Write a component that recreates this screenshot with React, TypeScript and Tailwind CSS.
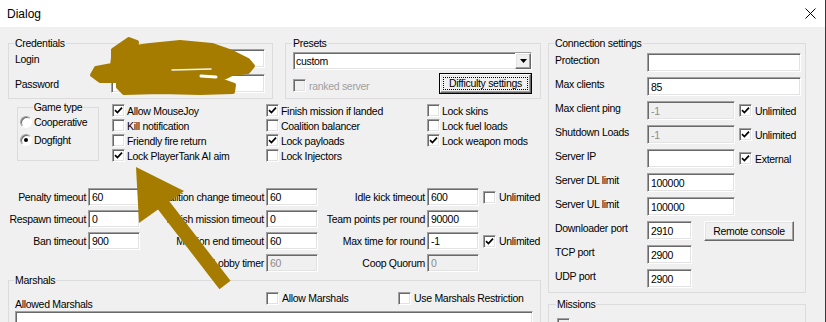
import React from 'react';

// classic win32 3d edges
const sunken = 'border border-t-[#a0a0a0] border-l-[#a0a0a0] border-b-white border-r-white shadow-[inset_1px_1px_0_#696969,inset_-1px_-1px_0_#e3e3e3]';
const raised = 'border border-t-white border-l-white border-b-[#696969] border-r-[#696969] shadow-[inset_-1px_-1px_0_#a0a0a0,inset_1px_1px_0_#e3e3e3]';

interface EditProps {
    w: string;
    h?: string;
    value?: string;
    disabled?: boolean;
}

const Edit: React.FC<EditProps> = ({ w, h = 'h-[19px]', value = '', disabled }) => (
    <div className={`${w} ${h} ${sunken} ${disabled ? 'bg-[#f0f0f0] text-[#8c8c8c]' : 'bg-white'} shrink-0 flex items-center pl-[3px]`}>
        {value}
    </div>
);

const Check: React.FC<{ checked?: boolean; disabled?: boolean }> = ({ checked, disabled }) => (
    <div className={`w-[13px] h-[13px] shrink-0 ${sunken} ${disabled ? 'bg-[#f0f0f0]' : 'bg-white'} flex items-center justify-center`}>
        {checked && (
            <svg width="9" height="9" viewBox="0 0 9 9">
                <path d="M1 4.2 L3.4 6.6 L8 1.6" fill="none" stroke="#000" strokeWidth="1.7" />
            </svg>
        )}
    </div>
);

const CheckRow: React.FC<{ label: string; checked?: boolean; disabled?: boolean; className?: string }> = ({ label, checked, disabled, className = '' }) => (
    <div className={`flex items-center gap-[2px] whitespace-nowrap ${className}`}>
        <Check checked={checked} disabled={disabled} />
        <span className={disabled ? 'text-[#a0a0a0]' : ''}>{label}</span>
    </div>
);

const Radio: React.FC<{ label: string; on?: boolean }> = ({ label, on }) => (
    <div className="h-[16px] flex items-center gap-[2px]">
        <div className="w-[12px] h-[12px] rounded-full bg-white border border-t-[#a0a0a0] border-l-[#a0a0a0] border-b-white border-r-white shadow-[inset_1px_1px_0_#696969] flex items-center justify-center">
            {on && <div className="w-[4px] h-[4px] rounded-full bg-black" />}
        </div>
        <span>{label}</span>
    </div>
);

const Group: React.FC<{ title: string; className?: string; center?: boolean; children?: React.ReactNode }> = ({ title, className = '', center, children }) => (
    <fieldset className={`border border-[#dcdcdc] ${className}`}>
        <legend className={`leading-[12px] px-[1px] ${center ? 'mx-auto' : '-ml-[1px]'}`}>{title}</legend>
        {children}
    </fieldset>
);

const TimeoutRow: React.FC<{ label: string; value: string; lw: string; disabled?: boolean; check?: boolean }> = ({ label, value, lw, disabled, check }) => (
    <div className="h-[18px] flex items-center">
        <div className={`${lw} text-right whitespace-nowrap pr-[2px]`}>{label}</div>
        <Edit w="w-[52px]" h="h-[18px]" value={value} disabled={disabled} />
        {check !== undefined && <CheckRow label="Unlimited" checked={check} className="ml-[4px] gap-[3px]" />}
    </div>
);

const connRows = [
    { label: 'Protection', w: 'w-[154px]', value: '' },
    { label: 'Max clients', w: 'w-[154px]', value: '85' },
    { label: 'Max client ping', w: 'w-[88px]', value: '-1', disabled: true, check: 'Unlimited' },
    { label: 'Shutdown Loads', w: 'w-[88px]', value: '-1', disabled: true, check: 'Unlimited' },
    { label: 'Server IP', w: 'w-[88px]', value: '', check: 'External' },
    { label: 'Server DL limit', w: 'w-[88px]', value: '100000' },
    { label: 'Server UL limit', w: 'w-[88px]', value: '100000' },
    { label: 'Downloader port', w: 'w-[45px]', value: '2910', button: 'Remote console' },
    { label: 'TCP port', w: 'w-[45px]', value: '2900' },
    { label: 'UDP port', w: 'w-[45px]', value: '2900' },
];

const App: React.FC = () => {
    return (
        <div className="w-[826px] h-[322px] overflow-hidden relative bg-[#f0f0f0] border-r border-[#3a3a3a] font-['Liberation_Sans',Arial,sans-serif] text-[10.5px] tracking-[-0.3px] leading-[12px] text-black">
            {/* title bar */}
            <div className="h-[27px] bg-white flex items-center justify-between pl-[7px] pr-[8px] text-[12px] tracking-normal">
                <span>Dialog</span>
                <svg width="11" height="11" viewBox="0 0 11 11" className="mr-[1px]">
                    <path d="M0.5 0.5 L10.5 10.5 M10.5 0.5 L0.5 10.5" stroke="#000" strokeWidth="1" />
                </svg>
            </div>

            <div className="flex gap-[7px] pl-[8px] pt-[10px]">
                {/* left column */}
                <div className="w-[533px] flex flex-col">
                    <div className="flex justify-between">
                        <Group title="Credentials" className="w-[265px] px-[6px] pb-[5px]">
                            <div className="flex items-center h-[19px]">
                                <span className="w-[96px]">Login</span>
                                <Edit w="w-[154px]" />
                            </div>
                            <div className="flex items-center h-[19px] mt-[6px]">
                                <span className="w-[96px]">Password</span>
                                <Edit w="w-[154px]" />
                            </div>
                        </Group>
                        <Group title="Presets" className="w-[256px] px-[7px] pt-[3px] pb-[5px]">
                            <div className={`w-[239px] h-[18px] ${sunken} bg-white flex items-center`}>
                                <span className="flex-1 pl-[2px]">custom</span>
                                <div className={`w-[16px] h-full ${raised} bg-[#f0f0f0] flex items-center justify-center`}>
                                    <svg width="7" height="4" viewBox="0 0 7 4"><path d="M0 0 H7 L3.5 4 Z" fill="#000" /></svg>
                                </div>
                            </div>
                            <div className="flex items-center justify-between mt-[3px] h-[20px]">
                                <CheckRow label="ranked server" disabled className="gap-[3px] mt-[5px]" />
                                <div className="w-[93px] h-[21px] border border-black bg-[#f0f0f0] mr-[1px]">
                                    <div className={`h-full ${raised} flex p-[2px]`}>
                                        <div className="flex-1 border border-dotted border-black flex items-center justify-center whitespace-nowrap">
                                            Difficulty settings
                                        </div>
                                    </div>
                                </div>
                            </div>
                        </Group>
                    </div>

                    {/* options */}
                    <div className="flex items-start mt-[2px]">
                        <Group title="Game type" center className="w-[82px] ml-[9px] px-[2px] pt-[1px] pb-[12px]">
                            <Radio label="Cooperative" />
                            <div className="mt-[2px]"><Radio label="Dogfight" on /></div>
                        </Group>
                        <div className="w-[154px] ml-[13px] mt-[2px] flex flex-col">
                            <CheckRow label="Allow MouseJoy" checked className="h-[15px]" />
                            <CheckRow label="Kill notification" className="h-[15px]" />
                            <CheckRow label="Friendly fire return" className="h-[15px]" />
                            <CheckRow label="Lock PlayerTank AI aim" checked className="h-[15px]" />
                        </div>
                        <div className="w-[161px] mt-[2px] flex flex-col">
                            <CheckRow label="Finish mission if landed" checked className="h-[15px]" />
                            <CheckRow label="Coalition balancer" className="h-[15px]" />
                            <CheckRow label="Lock payloads" checked className="h-[15px]" />
                            <CheckRow label="Lock Injectors" className="h-[15px]" />
                        </div>
                        <div className="mt-[2px] flex flex-col">
                            <CheckRow label="Lock skins" className="h-[15px]" />
                            <CheckRow label="Lock fuel loads" className="h-[15px]" />
                            <CheckRow label="Lock weapon mods" checked className="h-[15px]" />
                        </div>
                    </div>

                    {/* timeouts */}
                    <div className="flex items-start mt-[25px]">
                        <div className="flex flex-col gap-[4px]">
                            <TimeoutRow lw="w-[80px]" label="Penalty timeout" value="60" />
                            <TimeoutRow lw="w-[80px]" label="Respawn timeout" value="0" />
                            <TimeoutRow lw="w-[80px]" label="Ban timeout" value="900" />
                        </div>
                        <div className="flex flex-col gap-[4px]">
                            <TimeoutRow lw="w-[126px]" label="Coalition change timeout" value="60" />
                            <TimeoutRow lw="w-[126px]" label="Finish mission timeout" value="0" />
                            <TimeoutRow lw="w-[126px]" label="Mission end timeout" value="60" />
                            <TimeoutRow lw="w-[126px]" label="Lobby timer" value="60" disabled />
                        </div>
                        <div className="flex flex-col gap-[4px]">
                            <TimeoutRow lw="w-[109px]" label="Idle kick timeout" value="600" check={false} />
                            <TimeoutRow lw="w-[109px]" label="Team points per round" value="90000" />
                            <TimeoutRow lw="w-[109px]" label="Max time for round" value="-1" check={true} />
                            <TimeoutRow lw="w-[109px]" label="Coop Quorum" value="0" disabled />
                        </div>
                    </div>

                    {/* marshals */}
                    <Group title="Marshals" className="w-[533px] mt-[2px] px-[6px]">
                        <div className="flex h-[24px]">
                            <div className="w-[251px] flex items-end">Allowed Marshals</div>
                            <CheckRow label="Allow Marshals" className="w-[132px] h-[14px] mt-[5px] gap-[3px]" />
                            <CheckRow label="Use Marshals Restriction" className="h-[14px] mt-[5px] gap-[3px]" />
                        </div>
                        <div className={`w-[518px] h-[40px] mt-[1px] ${sunken} bg-white`} />
                    </Group>
                </div>

                {/* right column */}
                <div className="w-[258px] flex flex-col">
                    <Group title="Connection settings" className="w-[258px] pl-[6px] pr-[4px] pt-[4px] pb-[4px]">
                        <div className="flex flex-col gap-[5px]">
                            {connRows.map(r => (
                                <div key={r.label} className="flex items-start h-[19px]">
                                    <span className="w-[92px] mt-[1px] whitespace-nowrap">{r.label}</span>
                                    <Edit w={r.w} value={r.value} disabled={r.disabled} />
                                    {r.check && <CheckRow label={r.check} checked className="ml-[4px] gap-[3px] h-[19px]" />}
                                    {r.button && (
                                        <div className={`w-[90px] h-[20px] ml-[12px] ${raised} bg-[#f0f0f0] flex items-center justify-center`}>
                                            {r.button}
                                        </div>
                                    )}
                                </div>
                            ))}
                        </div>
                    </Group>
                    <Group title="Missions" className="w-[258px] mt-[5px] px-[8px] pt-[8px] h-[60px]">
                        <CheckRow label="" disabled />
                    </Group>
                </div>
            </div>

            {/* marker scribble and arrow drawn over the screenshot */}
            <svg className="absolute inset-0 pointer-events-none" width="826" height="322" viewBox="0 0 826 322">
                <path
                    d="M113 50 L129 39 L137 42 L136 47 L150 45 L180 42 L212 45 L232 52 L248 60 L253 66 L248 72 L232 74 L220 80 L234 85 L233 92 L200 93 L160 92 L124 93 L118 87 L118 81 L100 81 L92 75 L96 68 L112 65 L113 58 Z"
                    fill="#a67c00"
                    stroke="#a67c00"
                    strokeWidth="4"
                    strokeLinejoin="round"
                />
                <path d="M172 70 L211 69" stroke="#f4f4f4" strokeWidth="1.5" strokeLinecap="round" />
                <path d="M201 76 L216 77" stroke="#ffffff" strokeWidth="3" strokeLinecap="round" />
                <path d="M136 167 L139 223 L184 191 Z" fill="#a67c00" />
                <path d="M158 198 L225 285" stroke="#a67c00" strokeWidth="14" />
            </svg>
        </div>
    );
};

export default App;
